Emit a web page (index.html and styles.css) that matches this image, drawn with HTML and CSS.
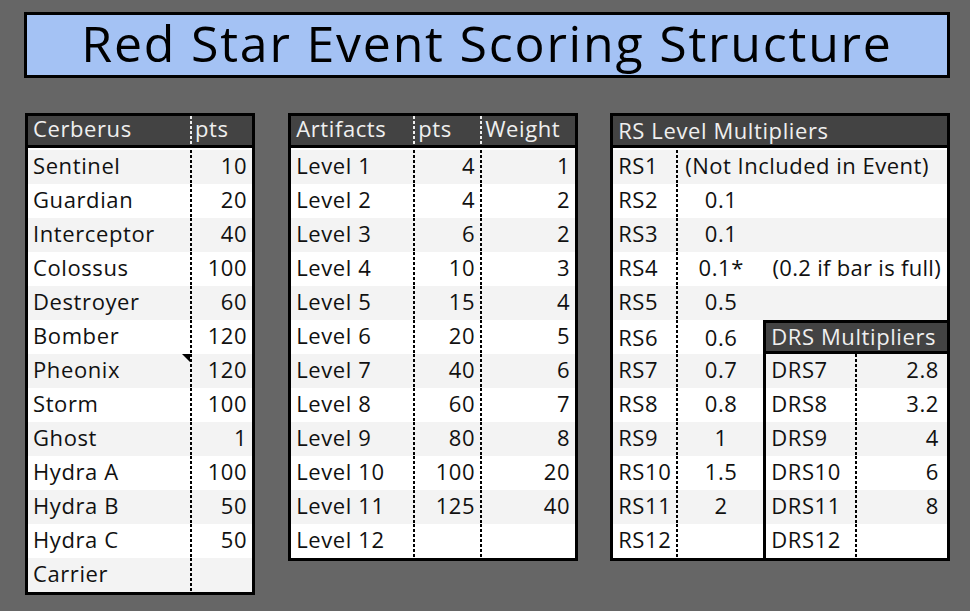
FILE: index.html
```html
<!DOCTYPE html>
<html>
<head>
<meta charset="utf-8">
<link rel="stylesheet" href="styles.css">
</head>
<body>
<div class="page">
  <div class="title">Red Star Event Scoring Structure</div>
  <div class="tables">
    <div class="tbl cerb">
      <div class="row hd"><span>Cerberus</span><span class="dv">pts</span></div>
      <div class="row g"><span>Sentinel</span><span class="dv n">10</span></div>
      <div class="row"><span>Guardian</span><span class="dv n">20</span></div>
      <div class="row g"><span>Interceptor</span><span class="dv n">40</span></div>
      <div class="row"><span>Colossus</span><span class="dv n">100</span></div>
      <div class="row g"><span>Destroyer</span><span class="dv n">60</span></div>
      <div class="row"><span>Bomber</span><span class="dv n">120</span></div>
      <div class="row g"><span class="note">Pheonix</span><span class="dv n">120</span></div>
      <div class="row"><span>Storm</span><span class="dv n">100</span></div>
      <div class="row g"><span>Ghost</span><span class="dv n">1</span></div>
      <div class="row"><span>Hydra A</span><span class="dv n">100</span></div>
      <div class="row g"><span>Hydra B</span><span class="dv n">50</span></div>
      <div class="row"><span>Hydra C</span><span class="dv n">50</span></div>
      <div class="row g"><span>Carrier</span><span class="dv n"></span></div>
    </div>

    <div class="tbl arti">
      <div class="row hd"><span>Artifacts</span><span class="dv">pts</span><span class="dv">Weight</span></div>
      <div class="row g"><span>Level 1</span><span class="dv n">4</span><span class="dv n">1</span></div>
      <div class="row"><span>Level 2</span><span class="dv n">4</span><span class="dv n">2</span></div>
      <div class="row g"><span>Level 3</span><span class="dv n">6</span><span class="dv n">2</span></div>
      <div class="row"><span>Level 4</span><span class="dv n">10</span><span class="dv n">3</span></div>
      <div class="row g"><span>Level 5</span><span class="dv n">15</span><span class="dv n">4</span></div>
      <div class="row"><span>Level 6</span><span class="dv n">20</span><span class="dv n">5</span></div>
      <div class="row g"><span>Level 7</span><span class="dv n">40</span><span class="dv n">6</span></div>
      <div class="row"><span>Level 8</span><span class="dv n">60</span><span class="dv n">7</span></div>
      <div class="row g"><span>Level 9</span><span class="dv n">80</span><span class="dv n">8</span></div>
      <div class="row"><span>Level 10</span><span class="dv n">100</span><span class="dv n">20</span></div>
      <div class="row g"><span>Level 11</span><span class="dv n">125</span><span class="dv n">40</span></div>
      <div class="row"><span>Level 12</span><span class="dv n"></span><span class="dv n"></span></div>
    </div>

    <div class="tbl rs">
      <div class="row hd"><span class="span3">RS Level Multipliers</span></div>
      <div class="row g"><span>RS1</span><span class="dv span2 ni">(Not Included in Event)</span></div>
      <div class="row"><span>RS2</span><span class="dv c">0.1</span><span></span></div>
      <div class="row g"><span>RS3</span><span class="dv c">0.1</span><span></span></div>
      <div class="row"><span>RS4</span><span class="dv c">0.1*</span><span class="r">(0.2 if bar is full)</span></div>
      <div class="row g"><span>RS5</span><span class="dv c">0.5</span><span></span></div>
      <div class="row"><span class="low">RS6</span><span class="dv c low">0.6</span></div>
      <div class="row g"><span>RS7</span><span class="dv c">0.7</span></div>
      <div class="row"><span>RS8</span><span class="dv c">0.8</span></div>
      <div class="row g"><span>RS9</span><span class="dv c">1</span></div>
      <div class="row"><span>RS10</span><span class="dv c">1.5</span></div>
      <div class="row g"><span>RS11</span><span class="dv c">2</span></div>
      <div class="row"><span>RS12</span><span class="dv c"></span></div>

      <div class="drs">
        <div class="row hd"><span class="span2">DRS Multipliers</span></div>
        <div class="row g"><span>DRS7</span><span class="dv n">2.8</span></div>
        <div class="row"><span>DRS8</span><span class="dv n">3.2</span></div>
        <div class="row g"><span>DRS9</span><span class="dv n">4</span></div>
        <div class="row"><span>DRS10</span><span class="dv n">6</span></div>
        <div class="row g"><span>DRS11</span><span class="dv n">8</span></div>
        <div class="row"><span>DRS12</span><span class="dv n"></span></div>
      </div>
    </div>
  </div>
</div>
</body>
</html>
```

FILE: styles.css
```css
* { box-sizing: border-box; }

html, body {
  margin: 0;
  padding: 0;
  background: #666666;
}

body {
  font-family: "Open Sans", "Noto Sans", sans-serif;
  color: #111;
  width: 970px;
  height: 611px;
  overflow: hidden;
}

.page {
  padding: 12px 20px 0 24px;
}

.title {
  width: 926px;
  height: 66px;
  background: #a4c2f4;
  border: 3px solid #000;
  font-size: 50px;
  line-height: 56px;
  text-align: center;
  letter-spacing: 1.8px;
  color: #000;
}

.tables {
  display: flex;
  align-items: flex-start;
  margin-top: 35px;
  margin-left: 1px;
  gap: 33px;
}

.tbl {
  display: grid;
  border: 3px solid #000;
  background: #fff;
  grid-auto-rows: 34px;
  font-size: 22px;
  letter-spacing: 0.6px;
}

.cerb { width: 231px; grid-template-columns: 162px 1fr; }
.arti { width: 291px; grid-template-columns: 122px 67px 1fr; }
.rs   { width: 341px; grid-template-columns: 63px 90px 1fr; margin-left: -1px; }

.row { display: contents; }

.row > span {
  display: block;
  height: 34px;
  line-height: 31px;
  padding: 0 5px;
  white-space: nowrap;
  background-color: #fff;
}

.row.g > span { background-color: #f3f3f3; }

.row.hd > span {
  height: 32px;
  line-height: 25px;
  background-color: #434343;
  color: #efefef;
  border-bottom: 3px solid #000;
}

.dv {
  background-image: repeating-linear-gradient(to bottom, #000 0 3px, transparent 3px 5px);
  background-size: 2px 100%;
  background-repeat: no-repeat;
  background-position: left top;
}

.row.hd > .dv {
  background-image: repeating-linear-gradient(to bottom, #eee 0 3px, transparent 3px 5px);
}

.n { text-align: right; }
.c { text-align: center; }
.r { text-align: right; }

.span2 { grid-column: span 2; }
.span3 { grid-column: span 3; }

.row > .ni { padding-left: 9px; letter-spacing: 0.5px; }
.row > .low { line-height: 35px; }
.row > .r { padding-right: 6px; letter-spacing: 0.3px; }

.rs .row.hd > span { line-height: 28px; }

.note { position: relative; }
.note::after {
  content: "";
  position: absolute;
  top: 0;
  right: 0;
  border-top: 8px solid #000;
  border-left: 8px solid transparent;
}

.drs {
  grid-column: 3;
  grid-row: 7 / span 7;
  display: grid;
  grid-template-columns: 89px 1fr;
  grid-auto-rows: 34px;
  border-left: 3px solid #000;
  margin-left: -3px;
}

.drs .row.hd > span {
  border-top: 3px solid #000;
  height: 34px;
  line-height: 26px;
}

.drs .n { padding-right: 8px; }
```
